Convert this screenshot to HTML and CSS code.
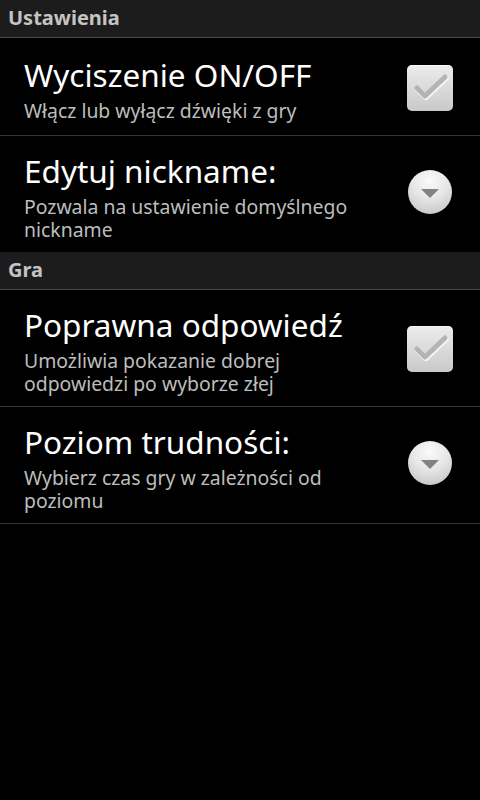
FILE: index.html
```html
<!DOCTYPE html>
<html lang="pl">
<head>
<meta charset="utf-8">
<link rel="stylesheet" href="styles.css">
</head>
<body>
<div class="screen">
  <div class="cat">Ustawienia</div>
  <div class="pref first">
    <div class="texts">
      <div class="title">Wyciszenie ON/OFF</div>
      <div class="summary">Włącz lub wyłącz dźwięki z gry</div>
    </div>
    <div class="widget">
      <div class="checkbox">
        <svg width="46" height="46" viewBox="0 0 46 46">
          <polyline points="10,23 18,31 38,12" fill="none" stroke="#f4f4f4" stroke-width="6" stroke-linecap="round" stroke-linejoin="round" transform="translate(0.8,1.2)"/>
          <polyline points="10,23 18,31 38,12" fill="none" stroke="#b4b4b4" stroke-width="5" stroke-linecap="round" stroke-linejoin="round"/>
        </svg>
      </div>
    </div>
  </div>
  <div class="pref last">
    <div class="texts">
      <div class="title">Edytuj nickname:</div>
      <div class="summary">Pozwala na ustawienie domyślnego nickname</div>
    </div>
    <div class="widget">
      <div class="dropdown"><span class="arrow"></span></div>
    </div>
  </div>
  <div class="cat">Gra</div>
  <div class="pref">
    <div class="texts">
      <div class="title">Poprawna odpowiedź</div>
      <div class="summary">Umożliwia pokazanie dobrej odpowiedzi po wyborze złej</div>
    </div>
    <div class="widget">
      <div class="checkbox">
        <svg width="46" height="46" viewBox="0 0 46 46">
          <polyline points="10,23 18,31 38,12" fill="none" stroke="#f4f4f4" stroke-width="6" stroke-linecap="round" stroke-linejoin="round" transform="translate(0.8,1.2)"/>
          <polyline points="10,23 18,31 38,12" fill="none" stroke="#b4b4b4" stroke-width="5" stroke-linecap="round" stroke-linejoin="round"/>
        </svg>
      </div>
    </div>
  </div>
  <div class="pref">
    <div class="texts">
      <div class="title">Poziom trudności:</div>
      <div class="summary">Wybierz czas gry w zależności od poziomu</div>
    </div>
    <div class="widget">
      <div class="dropdown"><span class="arrow"></span></div>
    </div>
  </div>
</div>
</body>
</html>
```

FILE: styles.css
```css
html, body {
  margin: 0;
  padding: 0;
  background: #000;
}
body {
  width: 480px;
  height: 800px;
  font-family: "Noto Sans", "Open Sans", sans-serif;
  color: #fff;
}
.screen {
  display: flex;
  flex-direction: column;
}
.cat {
  box-sizing: border-box;
  height: 38px;
  padding: 5px 0 0 8px;
  background: #1c1c1c;
  border-bottom: 1px solid #4a4a4a;
  color: #c4c4c4;
  font-weight: bold;
  font-size: 20px;
  line-height: 26px;
}
.pref {
  display: flex;
  align-items: center;
  box-sizing: border-box;
  min-height: 98px;
  padding: 14px 0 11px 24px;
  border-bottom: 1px solid #363636;
}
.pref.last {
  border-bottom: none;
  min-height: 0;
}
.texts {
  flex: 1;
  min-width: 0;
}
.title {
  font-size: 31.5px;
  line-height: 42px;
  color: #fff;
  white-space: nowrap;
}
.summary {
  margin-top: 3px;
  font-size: 19.4px;
  line-height: 23px;
  color: #bdbdbd;
  max-width: 340px;
}
.widget {
  width: 46px;
  margin: 0 27px 0 16px;
  display: flex;
  justify-content: center;
}
.checkbox {
  width: 46px;
  height: 46px;
  border-radius: 5px;
  background: linear-gradient(#ececec, #c9c9c9);
  box-shadow: inset 0 1px 0 rgba(255,255,255,0.6);
  margin-bottom: 1px;
}
.checkbox svg {
  display: block;
}
.dropdown {
  width: 44px;
  height: 44px;
  border-radius: 50%;
  background: radial-gradient(circle at 50% 25%, #fafafa 0%, #e6e6e6 45%, #bdbdbd 100%);
  display: flex;
  align-items: center;
  justify-content: center;
  margin-bottom: 8px;
}
.arrow {
  width: 0;
  height: 0;
  border-left: 9px solid transparent;
  border-right: 9px solid transparent;
  border-top: 9px solid #828282;
  margin-top: 3px;
}
```
